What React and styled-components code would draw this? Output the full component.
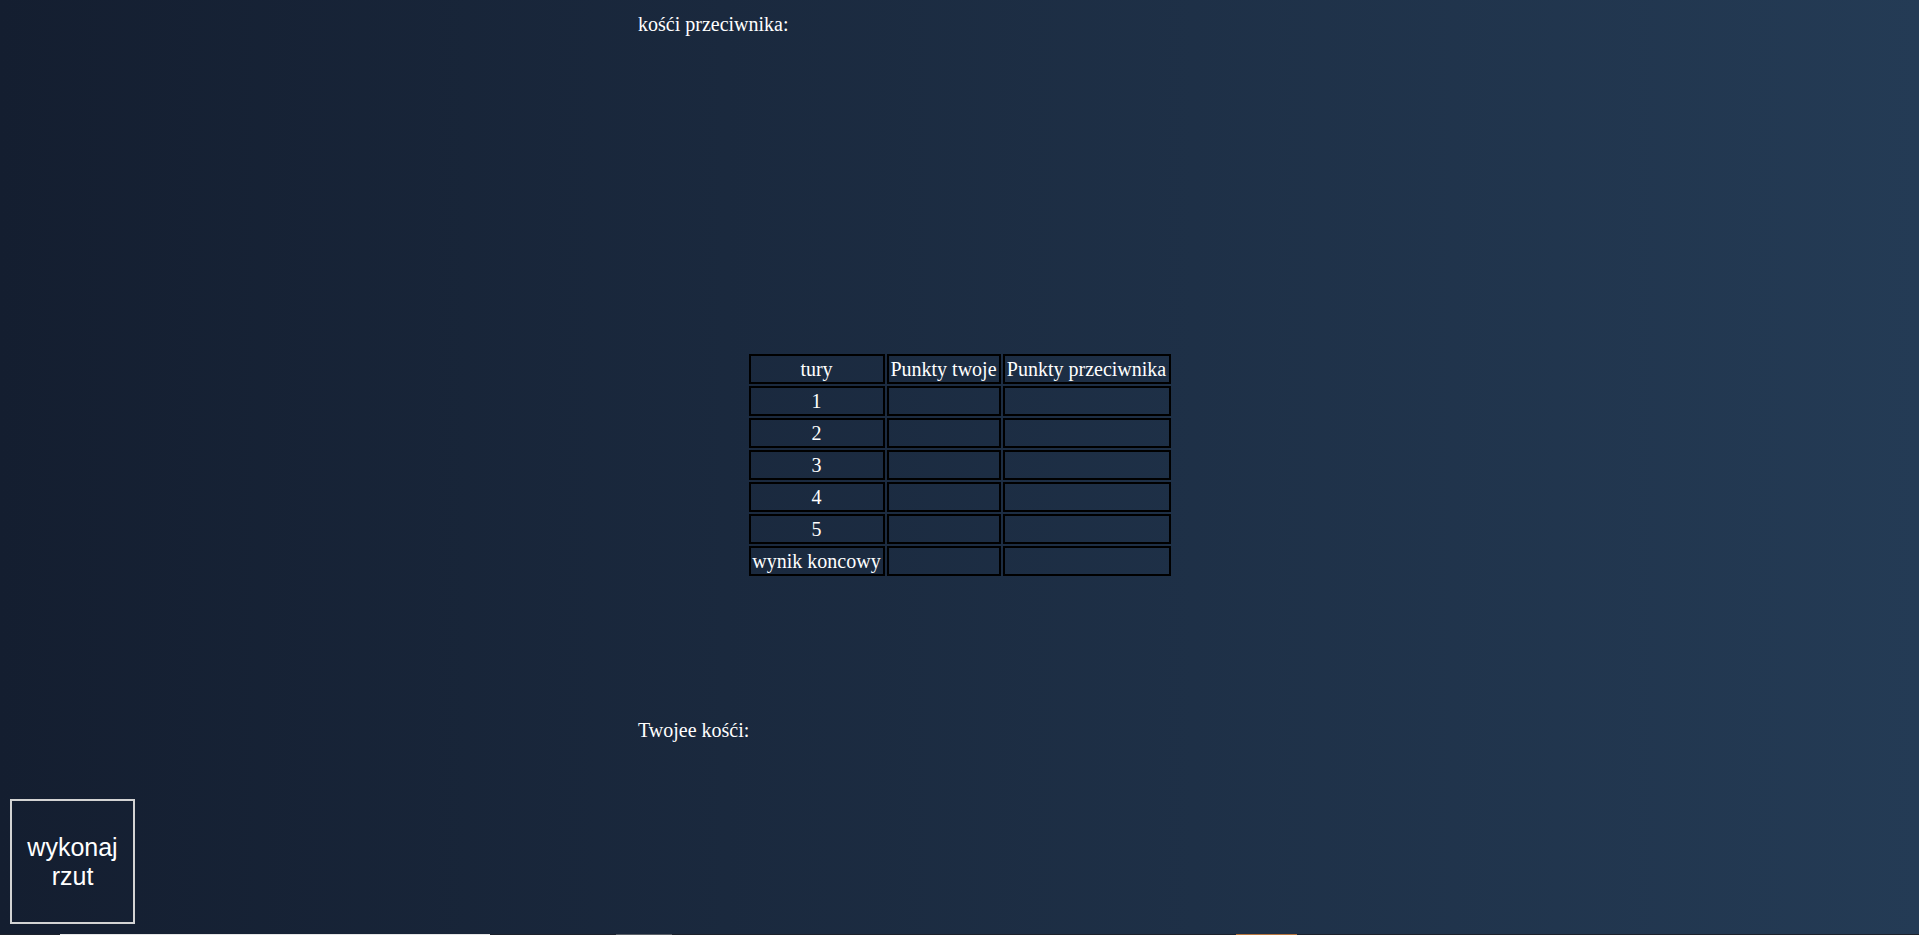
import React from 'react';
import styled, { createGlobalStyle } from 'styled-components';

const GlobalStyle = createGlobalStyle`
    html, body {
        margin: 0;
        padding: 0;
    }

    body {
        padding: 10px 10px 0;
        min-height: 100vh;
        box-sizing: border-box;
        background: linear-gradient(to right, #141e30, #243b55);
        background-attachment: fixed;
        color: #ffffff;
        font-family: "Liberation Serif", "Times New Roman", serif;
        font-size: 20px;
        overflow: hidden;
    }
`;

const Board = styled.div`
    display: grid;
    grid-template-columns: 1fr 643px 1fr;
    height: 924px;
`;

const Side = styled.div`
    display: flex;
    flex-direction: column;
    justify-content: flex-end;
    padding-bottom: 10px;
`;

const RollButton = styled.button`
    width: 125px;
    height: 125px;
    border: 2px solid #d3d3d3;
    background: transparent;
    color: #ffffff;
    font-family: "Liberation Sans", Arial, sans-serif;
    font-size: 25px;
    line-height: 29px;
    padding: 0 8px;
    cursor: pointer;
`;

const Arena = styled.main`
    display: flex;
    flex-direction: column;
    align-items: stretch;
`;

const Label = styled.div`
    line-height: 23px;
    padding-top: ${({ top }) => top}px;
`;

const DiceArea = styled.div`
    height: ${({ size }) => size}px;
    display: flex;
    gap: 10px;
`;

const ScoreTable = styled.table`
    align-self: center;
    border-spacing: 2px;
    font-size: 20px;
    color: #ffffff;
`;

const Cell = styled.td`
    box-sizing: border-box;
    height: 30px;
    width: ${({ w }) => w}px;
    padding: 1px 1px;
    border: 2px solid #000000;
    text-align: center;
    white-space: nowrap;
    line-height: 23px;
`;

const Tray = styled.div`
    display: flex;
    height: 120px;
    margin: 0 -10px;
    background: #1d222c;
`;

const Die = styled.div`
    flex: none;
    width: ${({ w }) => w}px;
    height: 100px;
    margin-left: ${({ gap }) => gap}px;
    background: ${({ color }) => color};
`;

const rounds = ['1', '2', '3', '4', '5', 'wynik koncowy'];

function App() {
    return (
        <>
            <GlobalStyle />
            <Board>
                <Side>
                    <RollButton>wykonaj rzut</RollButton>
                </Side>
                <Arena>
                    <Label top={3}>kośći przeciwnika:</Label>
                    <DiceArea size={316} />
                    <ScoreTable>
                        <tbody>
                            <tr>
                                <Cell w={136}>tury</Cell>
                                <Cell w={114}>Punkty twoje</Cell>
                                <Cell w={168}>Punkty przeciwnika</Cell>
                            </tr>
                            {rounds.map((round) => (
                                <tr key={round}>
                                    <Cell w={136}>{round}</Cell>
                                    <Cell w={114} />
                                    <Cell w={168} />
                                </tr>
                            ))}
                        </tbody>
                    </ScoreTable>
                    <Label top={141}>Twojee kośći:</Label>
                </Arena>
                <Side />
            </Board>
            <Tray>
                <Die w={430} gap={60} color="#e6e6e6" />
                <Die w={56} gap={126} color="#5a5f66" />
                <Die w={61} gap={564} color="#b8763e" />
            </Tray>
        </>
    );
}

export default App;
